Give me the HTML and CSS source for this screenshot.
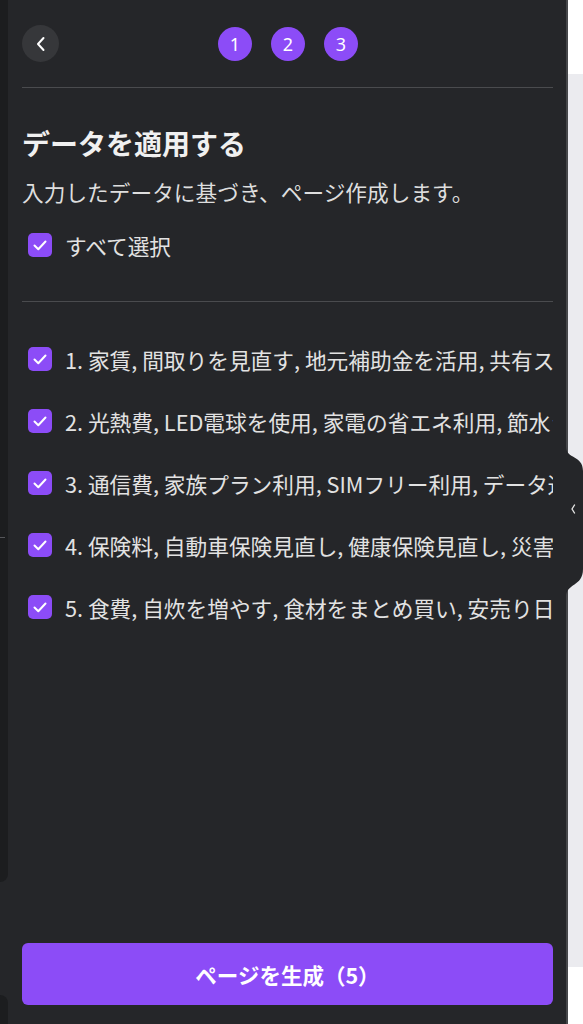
FILE: index.html
```html
<!DOCTYPE html>
<html lang="ja">
<head>
    <meta charset="UTF-8">
    <meta name="viewport" content="width=device-width, initial-scale=1.0">
    <title>データを適用する</title>
    <link rel="stylesheet" href="styles.css">
</head>
<body>
    <div class="lado-izq">
        <div class="bloque-oscuro arriba"><div class="marca"></div></div>
        <div class="bloque-oscuro abajo"></div>
    </div>

    <div class="panel">
        <div class="cabecera">
            <button class="volver">
                <svg width="12" height="16" viewBox="0 0 12 16"><path d="M8.5 2 L3 8 L8.5 14" fill="none" stroke="#fff" stroke-width="2" stroke-linecap="round" stroke-linejoin="round"/></svg>
            </button>
            <div class="pasos">
                <span class="paso">1</span>
                <span class="paso">2</span>
                <span class="paso">3</span>
            </div>
        </div>
        <hr class="linea">

        <h2 class="titulo">データを適用する</h2>
        <p class="sub">入力したデータに基づき、ページ作成します。</p>
        <label class="fila todo">
            <span class="check"><svg width="24" height="24" viewBox="0 0 24 24"><path d="M6.5 12.5 L10.3 16.2 L17.5 8.5" fill="none" stroke="#fff" stroke-width="2" stroke-linecap="round" stroke-linejoin="round"/></svg></span>
            <span class="texto">すべて選択</span>
        </label>
        <hr class="linea">

        <div class="lista" id="lista"></div>

        <button class="generar">ページを生成（5）</button>
    </div>

    <div class="lado-der">
        <div class="blanco arriba"></div>
        <div class="gris"></div>
        <div class="blanco abajo"></div>
    </div>

    <svg class="pestana" width="17" height="150" viewBox="0 0 17 150">
        <path d="M0 0 C0 12 17 8 17 24 L17 122 C17 140 0 136 0 150 Z" fill="#252629"/>
        <path d="M8.5 58 L6 62 L8.5 66" fill="none" stroke="#e6e6e6" stroke-width="1.4" stroke-linecap="round" stroke-linejoin="round"/>
    </svg>

    <script>
        const filas = [
            "1. 家賃, 間取りを見直す, 地元補助金を活用, 共有スペースを活用",
            "2. 光熱費, LED電球を使用, 家電の省エネ利用, 節水シャワー",
            "3. 通信費, 家族プラン利用, SIMフリー利用, データ通信量の見直し",
            "4. 保険料, 自動車保険見直し, 健康保険見直し, 災害保険",
            "5. 食費, 自炊を増やす, 食材をまとめ買い, 安売り日を活用"
        ];
        const lista = document.getElementById("lista");
        filas.forEach(txt => {
            lista.innerHTML += `
                <label class="fila">
                    <span class="check"><svg width="24" height="24" viewBox="0 0 24 24"><path d="M6.5 12.5 L10.3 16.2 L17.5 8.5" fill="none" stroke="#fff" stroke-width="2" stroke-linecap="round" stroke-linejoin="round"/></svg></span>
                    <span class="texto">${txt}</span>
                </label>
            `;
        });
    </script>
</body>
</html>
```

FILE: styles.css
```css
* {
    margin: 0;
    padding: 0;
    box-sizing: border-box;
    font-family: 'Noto Sans CJK JP', 'Noto Sans', sans-serif;
}
body {
    background-color: #252629;
    color: #e2e2e2;
    display: flex;
    width: 583px;
    height: 1024px;
    overflow: hidden;
    position: relative;
}
.lado-izq {
    width: 8px;
    display: flex;
    flex-direction: column;
    justify-content: space-between;
}
.bloque-oscuro {
    background: #1c1d1f;
}
.bloque-oscuro.arriba {
    height: 882px;
    border-bottom-right-radius: 8px;
    padding-top: 537px;
}
.bloque-oscuro.abajo {
    height: 29px;
    border-top-right-radius: 8px;
}
.marca {
    width: 5px;
    height: 1px;
    background: #55565a;
}
.panel {
    width: 560px;
    border-right: 2px solid #46474a;
    padding: 25px 13px 19px 14px;
    display: flex;
    flex-direction: column;
}
.cabecera {
    display: flex;
    align-items: center;
    height: 37px;
}
.volver {
    width: 37px;
    height: 37px;
    border-radius: 50%;
    border: none;
    background: #36373a;
    display: flex;
    align-items: center;
    justify-content: center;
}
.pasos {
    display: flex;
    gap: 19px;
    margin-left: 159px;
}
.paso {
    width: 34px;
    height: 34px;
    border-radius: 50%;
    background: #8c4cf7;
    color: #fff;
    font-family: 'Noto Sans', sans-serif;
    font-size: 18px;
    display: flex;
    align-items: center;
    justify-content: center;
}
.linea {
    border: none;
    height: 1px;
    background: #4a4b4e;
}
.cabecera + .linea {
    margin-top: 25px;
}
.titulo {
    margin-top: 36px;
    font-size: 28px;
    line-height: 38px;
    font-weight: 700;
    color: #f0f0f0;
}
.sub {
    margin-top: 15px;
    font-size: 21.7px;
    line-height: 30px;
    color: #dedede;
}
.fila {
    display: flex;
    align-items: center;
    gap: 13px;
    height: 30px;
    padding-left: 6px;
}
.fila.todo {
    margin-top: 23px;
    margin-bottom: 41px;
}
.check {
    width: 24px;
    height: 24px;
    flex-shrink: 0;
    border-radius: 5px;
    background: #8c4cf7;
    display: flex;
}
.texto {
    font-size: 21.7px;
    white-space: nowrap;
    overflow: hidden;
    color: #e2e2e2;
}
.lista {
    margin-top: 42px;
    display: flex;
    flex-direction: column;
    gap: 32px;
}
.generar {
    margin-top: auto;
    height: 62px;
    border: none;
    border-radius: 6px;
    background: #8c4cf7;
    color: #fff;
    font-size: 21.5px;
    font-weight: 700;
}
.lado-der {
    width: 15px;
    display: flex;
    flex-direction: column;
}
.blanco {
    background: #fff;
}
.blanco.arriba {
    height: 74px;
}
.blanco.abajo {
    height: 57px;
}
.gris {
    flex: 1;
    background: #ebebef;
}
.pestana {
    position: absolute;
    left: 566px;
    top: 447px;
}
```
